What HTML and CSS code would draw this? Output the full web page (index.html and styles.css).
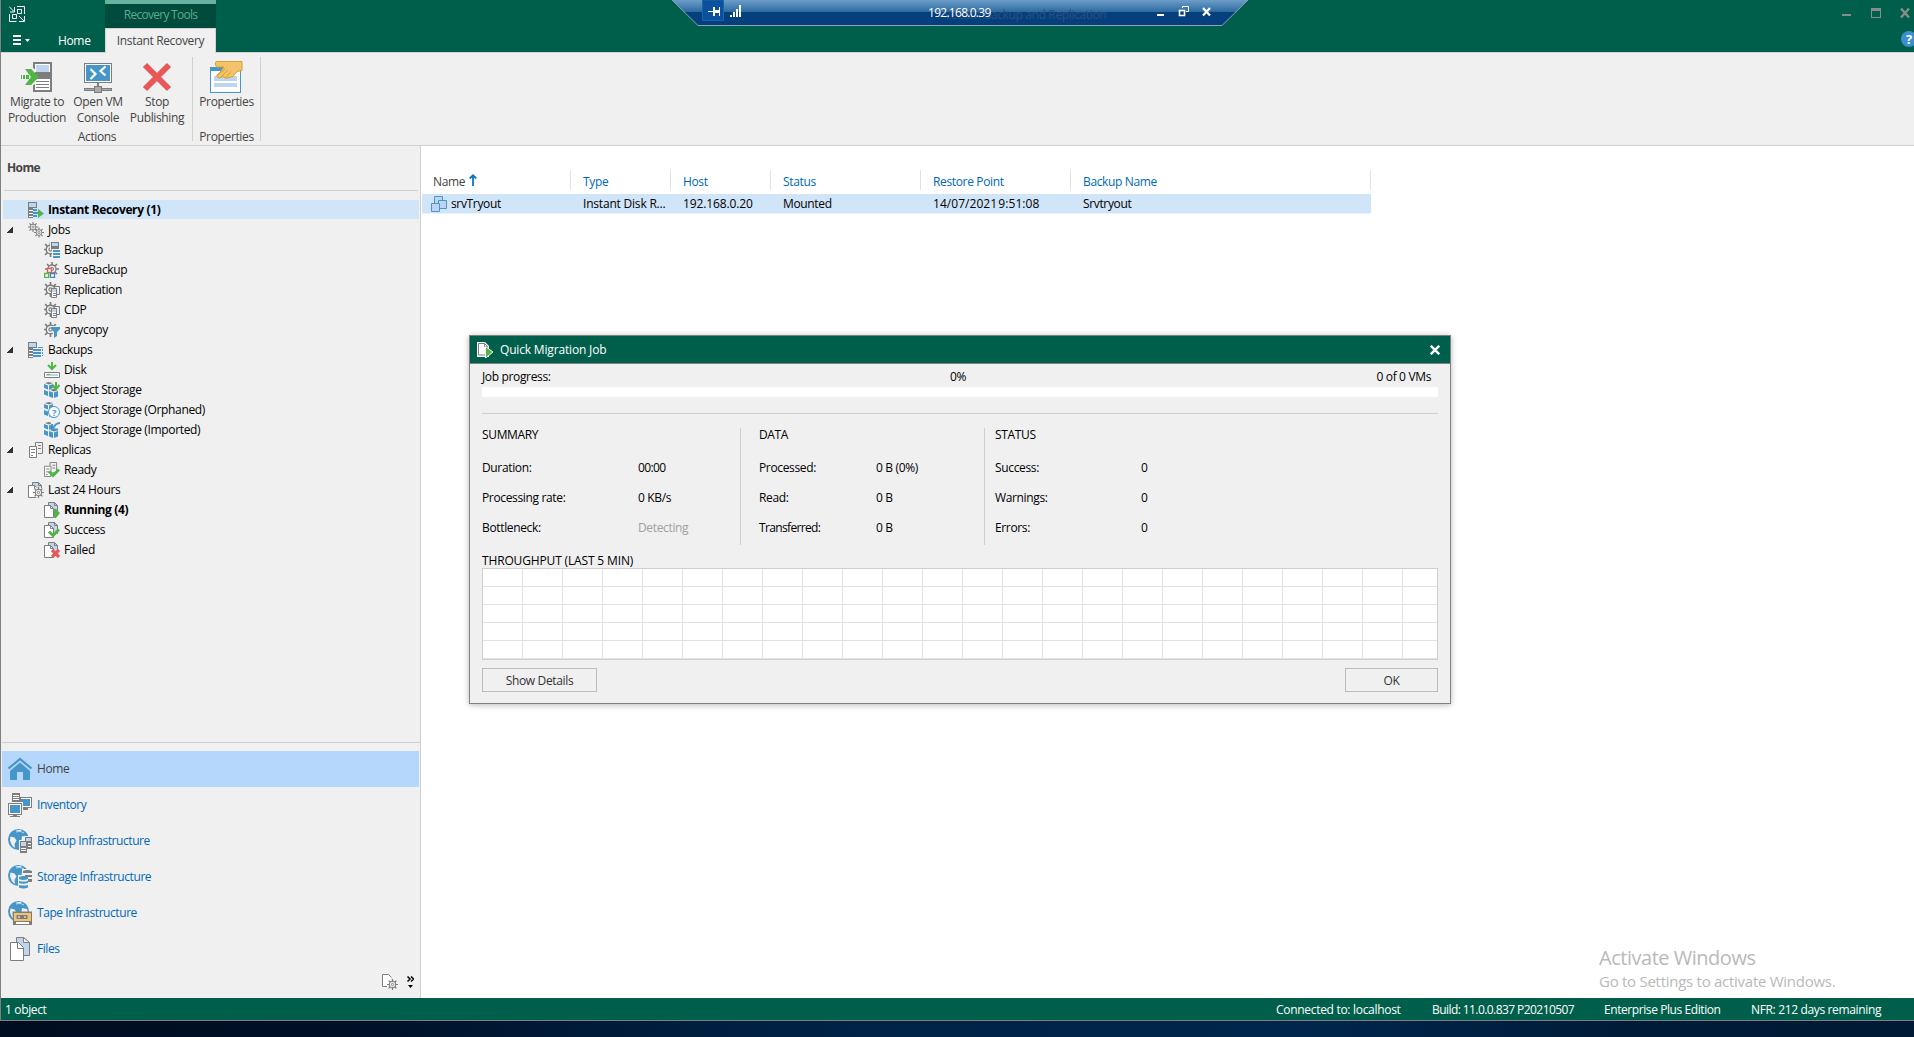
FILE: index.html
```
<!DOCTYPE html>
<html lang="en">
<head>
<meta charset="utf-8">
<title>Veeam Backup and Replication</title>
<link rel="stylesheet" href="styles.css">
</head>
<body>
<svg class="defs" aria-hidden="true">
  <symbol id="gear" viewBox="0 0 16 16"><g fill="none" stroke="#7d7d7d"><circle cx="8" cy="8" r="4.6" stroke-width="1.5"/><circle cx="8" cy="8" r="1.7" stroke-width="1.2"/><path stroke-width="1.8" d="M8 0v3.5M8 12.5V16M0 8h3.5M12.5 8H16M2.3 2.3l2.4 2.4M11.3 11.3l2.4 2.4M13.7 2.3l-2.4 2.4M4.7 11.3l-2.4 2.4"/></g></symbol>
  <symbol id="server" viewBox="0 0 16 16"><path fill="#7d7d7d" d="M0 0h9v6H5v10H0z"/><path fill="#bdd5ef" d="M1 1h7v4H1z"/><path fill="#fff" d="M1 8h4v1H1zM1 11h4v1H1zM1 14h4v1H1z"/></symbol>
  <symbol id="page" viewBox="0 0 16 16"><path fill="#bdd5ef" stroke="#7d7d7d" d="M4.500 4V.5h6l3 3v8H10"/><path fill="#fff" stroke="#7d7d7d" d="M.5 3.500h6l3 3v9h-9z"/><path fill="none" stroke="#7d7d7d" d="M6.500 3.500v3h3M10.500.5v3h3"/></symbol>
  <symbol id="tick" viewBox="0 0 16 16"><path fill="none" stroke="#4fb545" stroke-width="3" d="M5 9.500l4 4 6-6"/></symbol>
  <symbol id="twinserver" viewBox="0 0 16 16"><path fill="#f0f0f0" stroke="#7d7d7d" d="M7.500 4V.5h7v11H10"/><path stroke="#7d7d7d" d="M10 3.500h3M10 6.500h3"/><path fill="#fff" stroke="#7d7d7d" d="M1.500 4.500h7v11h-7z"/><path stroke="#7d7d7d" d="M3 7.500h4M3 10.500h4M3 13.500h2"/></symbol>
  <symbol id="cubes" viewBox="0 0 16 16"><g fill="#4796c9"><path d="M0 2l4 1.500v4L0 6zM0 8l4 1.500V14L0 12.500zM5 9l4 1.500V16l-4-1.500zM10 10.500L14 9v5.500L10 16zM5 3.500L9 2v4L5 8z"/></g><path fill="#7d7d7d" d="M1 1l3.500-1L9 1 5 2.500zM6 8l4-1.500L14 8l-4 1.500z"/></symbol>
  <symbol id="globe" viewBox="0 0 24 24"><circle cx="10.500" cy="10.500" r="10.500" fill="#4796c9"/><path fill="#f0f0f0" d="M2.500 7.500l4 1 2 3-2 3.500.5 4-3-2.500-2-5zM14 7l5 1 1.500 5-4 1-3-3zM7 1.500l7-.8-2 2z"/><path fill="none" stroke="#bdd5ef" d="M8 3q4-2 8 1"/></symbol>
  <symbol id="i-instant" viewBox="0 0 16 16"><use href="#server"/><path fill="#4796c9" d="M5 7h4v2H5zM5 10h5v2H5zM5 13h4v2H5z"/><path fill="#4fb545" d="M10 7l6 4.500L10 16z"/></symbol>
  <symbol id="i-jobs" viewBox="0 0 16 16"><use href="#gear" width="10" height="10"/><use href="#gear" x="6" y="5" width="10" height="11"/></symbol>
  <symbol id="i-backup" viewBox="0 0 16 16"><use href="#gear" x="-1" width="15" height="15"/><path fill="#f0f0f0" d="M6 0h10v16H8V7H6z"/><path fill="#7d7d7d" d="M7 0h8v7H7z"/><path fill="#bdd5ef" d="M8 1h6v3H8z"/><path fill="#4796c9" d="M9 8h7v2H9zM9 11h7v2H9zM9 14h7v2H9z"/></symbol>
  <symbol id="i-sure" viewBox="0 0 16 16"><use href="#gear" width="16" height="14"/><path fill="#fff" stroke="#e85858" stroke-width="1.300" d="M3.500 6.500h4v4h-4z"/><path fill="#fff" stroke="#4fb545" stroke-width="1.300" d="M.6 11.500h4v4h-4z"/><path fill="#fff" stroke="#4380c5" stroke-width="1.300" d="M6.500 11.500h4v4h-4z"/></symbol>
  <symbol id="i-repl" viewBox="0 0 16 16"><use href="#gear" x="-1" width="15" height="15"/><path fill="#f0f0f0" stroke="#7d7d7d" d="M10.500 6V4.500h5v8H13"/><path fill="#fff" stroke="#7d7d7d" d="M7.500 6.500h5v9h-5z"/><path stroke="#7d7d7d" d="M9 11.500h3M9 13.500h3"/><path fill="#bdd5ef" d="M8 7h4v3H8z"/></symbol>
  <symbol id="i-copy" viewBox="0 0 16 16"><use href="#gear" x="-1" width="15" height="15"/><path fill="#f0f0f0" d="M6 4h10v3l-3 4v5h-4v-5z"/><path fill="#4796c9" d="M7 5h9v2l-3 3v4l-3 2v-6L7 7z"/></symbol>
  <symbol id="i-backups" viewBox="0 0 16 16"><use href="#server"/><path fill="#4796c9" d="M5 7h8v2H5zM5 10h8v2H5zM5 13h8v2H5zM10 5h5v1h-5zM14 7h1v2h-1zM14 10h1v2h-1zM14 13h1v1h-1z"/></symbol>
  <symbol id="i-disk" viewBox="0 0 16 16"><path fill="#fff" stroke="#7d7d7d" d="M.5 10.500h15v5H.5z"/><path fill="#bdd5ef" d="M2 12h12v2H2z"/><path fill="#4fb545" d="M3 12h3v1H3z"/><path fill="none" stroke="#4fb545" stroke-width="2" d="M8 0v7M4 3l4 4 4-4"/></symbol>
  <symbol id="i-obj" viewBox="0 0 16 16"><use href="#cubes"/><path fill="none" stroke="#f0f0f0" stroke-width="3" d="M12 0v7"/><path fill="none" stroke="#4fb545" stroke-width="2" d="M12 0v7M8.500 3l3.500 4 3.500-4"/></symbol>
  <symbol id="i-orph" viewBox="0 0 16 16"><use href="#cubes"/><circle cx="10" cy="10" r="5.500" fill="#fff" stroke="#4796c9"/><text x="10.200" y="13.500" text-anchor="middle" font-size="9.500" font-weight="700" fill="#4796c9">?</text></symbol>
  <symbol id="i-imp" viewBox="0 0 16 16"><use href="#cubes"/><path fill="#f0f0f0" d="M7 0h9v8H7z"/><path fill="none" stroke="#4796c9" stroke-width="2" d="M16 1q-5 0-7 6M8 2v5.500h6"/></symbol>
  <symbol id="i-ready" viewBox="0 0 16 16"><use href="#twinserver" x="-1" width="15" height="15"/><use href="#tick"/></symbol>
  <symbol id="i-last" viewBox="0 0 16 16"><use href="#page"/><circle cx="10.500" cy="10.500" r="5.500" fill="#f0f0f0"/><use href="#gear" x="5" y="5" width="11" height="11"/></symbol>
  <symbol id="i-run" viewBox="0 0 16 16"><use href="#page"/><path fill="#4fb545" d="M10 7h2l4 4-4 5h-2z"/></symbol>
  <symbol id="i-succ" viewBox="0 0 16 16"><use href="#page"/><use href="#tick"/></symbol>
  <symbol id="i-fail" viewBox="0 0 16 16"><use href="#page"/><path stroke="#e85858" stroke-width="3.200" d="M8 8l7 7M15 8l-7 7"/></symbol>
</svg>

<div class="window">
  <header class="titlebar">
    <div class="left-tools">
      <svg class="logo" width="16" height="16" viewBox="0 0 16 16" fill="none" stroke="#fff"><path d="M0 .5l5 5M5.500 1v5H1M8 .5h7.500V8M8.500 3v4.500h4V3.500H8M.5 8v7.500h7M3.500 8.500h4v4h-4zM10 10l5 5M10 15.500h5.500V10"/></svg>
      <svg class="burger" width="17" height="10" viewBox="0 0 17 10"><path fill="#fff" d="M0 0h8v2H0zM0 4h8v2H0zM0 8h8v2H0zM12 4h5l-2.500 3z"/></svg>
    </div>
    <div class="home-tab"><span class="t">Home</span></div>
    <div class="context">
      <div class="context-title"><span class="t">Recovery Tools</span></div>
      <div class="context-tab"><span class="t">Instant Recovery</span></div>
    </div>
    <svg class="controls" width="74" height="52" viewBox="0 0 74 52"><path fill="#8b8b8b" d="M2 14h9v2H2zM31 8h10v10H31zm1 3v6h8v-6z" fill-rule="evenodd"/><path stroke="#8b8b8b" stroke-width="2.400" d="M61 8.500l8 9M69 8.500l-8 9"/><circle cx="69" cy="39" r="8" fill="#3a8fce"/><text x="69" y="44" text-anchor="middle" font-size="13" font-weight="700" fill="#fff">?</text></svg>
  </header>

  <section class="ribbon">
    <div class="group actions">
      <div class="buttons">
        <div class="rb b1"><svg width="32" height="32" viewBox="0 0 32 32"><path fill="#7d7d7d" d="M12 1h19v30H12z"/><path fill="#fff" d="M14 3h15v8H14zM14 18h15v11H14z"/><path fill="#bdd5ef" d="M15 4h13v7H15z"/><path fill="#7d7d7d" d="M15 20h13v1H15zM15 23h13v1H15zM15 26h13v1H15z"/><path fill="#f0f0f0" d="M3 6h8l3 2.500V23l-3 2H3z"/><path fill="#7d7d7d" d="M18 11h13v7H18z"/><path fill="#4fb545" d="M4 8h6l8 8-8 8H4l6-8zM0 14h1v4H0zM2 14h2v4H2zM5 14h3v4H5z"/></svg><span class="t">Migrate to</span><span class="t">Production</span></div>
        <div class="rb b2"><svg width="32" height="32" viewBox="0 0 32 32"><path fill="#7d7d7d" d="M2 2h28v20H2zM15 22h2v4h-2z"/><path fill="#fff" d="M3 3h26v18H3z"/><path fill="#4796c9" d="M4 4h24v16H4z"/><path fill="none" stroke="#fff" stroke-width="2.200" d="M8.500 8l5 5-5 5M23.500 5.500l-5 4.500 5 4.500"/><path fill="#7d7d7d" d="M2 27h28v3H2zM12 25h8v7h-8z"/><path fill="#aaa" d="M3 28h9v1H3zM20 28h9v1h-9zM13 26h6v5h-6z"/></svg><span class="t">Open VM</span><span class="t">Console</span></div>
        <div class="rb b3"><svg width="32" height="32" viewBox="0 0 32 32"><path stroke="#e85858" stroke-width="6" d="M4 4l24 24M28 4L4 28"/></svg><span class="t">Stop</span><span class="t">Publishing</span></div>
      </div>
      <div class="group-name"><span class="t">Actions</span></div>
    </div>
    <div class="group props">
      <div class="buttons">
        <div class="rb b4"><svg width="33" height="32" viewBox="0 0 33 32"><path fill="#4796c9" d="M0 6h31v26H0z"/><path fill="#fff" d="M1 10h29v21H1z"/><path fill="#bdd5ef" d="M4 15h23v5H4zM4 22h23v4H4z"/><path fill="#f2c36b" stroke="#dca02c" d="M6 .5h26v9l-5 1-4 5-4 1-3 .8-3-1.800-4 1.500q-3-1-2-3l4-4 3-4H6.500Q4 2.500 6 .5z"/><path fill="none" stroke="#dca02c" d="M7 15l8-7M11 16l7-7M16 16.500l5-6"/></svg><span class="t">Properties</span></div>
      </div>
      <div class="group-name"><span class="t">Properties</span></div>
    </div>
  </section>

  <div class="workspace">
    <aside class="sidebar">
      <h2><span class="t">Home</span></h2>
      <ul class="tree">
        <li class="sel"><svg class="ic"><use href="#i-instant"/></svg><span class="t">Instant Recovery (1)</span></li>
        <li class="open"><svg class="ic"><use href="#i-jobs"/></svg><span class="t">Jobs</span></li>
        <li class="sub"><svg class="ic"><use href="#i-backup"/></svg><span class="t">Backup</span></li>
        <li class="sub"><svg class="ic"><use href="#i-sure"/></svg><span class="t">SureBackup</span></li>
        <li class="sub"><svg class="ic"><use href="#i-repl"/></svg><span class="t">Replication</span></li>
        <li class="sub"><svg class="ic"><use href="#i-repl"/></svg><span class="t">CDP</span></li>
        <li class="sub"><svg class="ic"><use href="#i-copy"/></svg><span class="t">anycopy</span></li>
        <li class="open"><svg class="ic"><use href="#i-backups"/></svg><span class="t">Backups</span></li>
        <li class="sub"><svg class="ic"><use href="#i-disk"/></svg><span class="t">Disk</span></li>
        <li class="sub"><svg class="ic"><use href="#i-obj"/></svg><span class="t">Object Storage</span></li>
        <li class="sub"><svg class="ic"><use href="#i-orph"/></svg><span class="t">Object Storage (Orphaned)</span></li>
        <li class="sub"><svg class="ic"><use href="#i-imp"/></svg><span class="t">Object Storage (Imported)</span></li>
        <li class="open"><svg class="ic"><use href="#twinserver"/></svg><span class="t">Replicas</span></li>
        <li class="sub"><svg class="ic"><use href="#i-ready"/></svg><span class="t">Ready</span></li>
        <li class="open"><svg class="ic"><use href="#i-last"/></svg><span class="t">Last 24 Hours</span></li>
        <li class="sub bold"><svg class="ic"><use href="#i-run"/></svg><span class="t">Running (4)</span></li>
        <li class="sub"><svg class="ic"><use href="#i-succ"/></svg><span class="t">Success</span></li>
        <li class="sub"><svg class="ic"><use href="#i-fail"/></svg><span class="t">Failed</span></li>
      </ul>
      <nav class="views">
        <a class="on"><svg viewBox="0 0 24 24"><path fill="#4796c9" d="M2 14l10-8.500L22 14v9h-7v-8H9v8H2z"/><path fill="none" stroke="#4796c9" stroke-width="2.200" d="M.5 11.500L12 2l11.500 9.500"/></svg><span class="t">Home</span></a>
        <a><svg viewBox="0 0 24 24"><path fill="#7d7d7d" d="M4 0h8v9H4zM12 4h12v11H12zM15 15h5v2h-5z"/><path fill="#fff" d="M5 2h6v1H5zM5 4h6v1H5zM5 6h6v1H5zM13 5h10v9H13z"/><path fill="#4796c9" d="M13 6h9v7h-9z"/><path fill="#f0f0f0" d="M0 9h15v10H0z"/><path fill="#7d7d7d" d="M0 10h14v12H0zM5 22h4v1h3v1H2v-1h3z"/><path fill="#fff" d="M1 11h12v10H1z"/><path fill="#4796c9" d="M2 12h10v8H2z"/></svg><span class="t">Inventory</span></a>
        <a><svg viewBox="0 0 24 24"><use href="#globe"/><path fill="#f0f0f0" d="M11 11h5V7h8v14h-4v3h-9z"/><path fill="#7d7d7d" d="M17 8h7v12h-7zM12 12h7v12h-7z"/><path fill="#bdd5ef" d="M18 9h5v3h-5zM13 13h5v4h-5z"/><path fill="#fff" d="M13 19h5v1h-5zM13 21h5v1h-5zM20 14h3v1h-3zM20 17h3v1h-3z"/></svg><span class="t">Backup Infrastructure</span></a>
        <a><svg viewBox="0 0 24 24"><use href="#globe"/><path fill="#f0f0f0" d="M10 10h4V4h10v15h-3v5H10z"/><path fill="#7d7d7d" d="M15 6q4.500-2 9 0v2h-9zM17 10h7v2h-7zM20 14h4v3h-4z"/><path fill="#4796c9" d="M11 12q5-2 9 0v2q-5 2-9 0zM11 16q5 1 9 0v2q-5 1.500-9 0zM11 20q5 1 9 0v2.500q-5 2-9 0z"/></svg><span class="t">Storage Infrastructure</span></a>
        <a><svg viewBox="0 0 24 24"><use href="#globe"/><path fill="#7d7d7d" d="M4.500 10.500H24V24H5z"/><path fill="#f2c36b" d="M6 12h17v8H6z"/><path fill="#7d7d7d" d="M8.500 14h11v4h-11z"/><path fill="#fff" d="M10 15.500h2v1h-2zM16 15.500h2v1h-2zM8 21h13v2H8z"/></svg><span class="t">Tape Infrastructure</span></a>
        <a><svg viewBox="0 0 24 24"><path fill="#bdd5ef" stroke="#7d7d7d" d="M8.500 5V.5h7l6 5v13H16"/><path fill="#fff" stroke="#7d7d7d" d="M15.500.5l6 5h-6zM2.500 5.500h8l5 5v13h-13z"/><path fill="none" stroke="#7d7d7d" d="M9.500 5.500v6h6"/></svg><span class="t">Files</span></a>
      </nav>
      <div class="views-more">
        <svg width="16" height="16" viewBox="0 0 16 16"><path fill="#fff" stroke="#7d7d7d" d="M5 12.500H.5V.5h6l3 3"/><use href="#gear" x="5" y="5" width="11" height="11"/></svg>
        <svg width="7" height="12" viewBox="0 0 7 12"><path fill="none" stroke="#000" stroke-width="1.500" d="M.5.5L3 3 .5 5.500M4 .5L6.500 3 4 5.500"/><path d="M1 9h5l-2.500 3z"/></svg>
      </div>
    </aside>

    <main class="list">
      <div class="row head"><div class="name"><span class="t">Name</span><svg width="8" height="12" viewBox="0 0 8 12"><path fill="none" stroke="#0b74c4" stroke-width="1.800" d="M4 12V1.500M.7 4.500L4 1.300l3.300 3.200"/></svg></div><div><span class="t">Type</span></div><div><span class="t">Host</span></div><div><span class="t">Status</span></div><div><span class="t">Restore Point</span></div><div><span class="t">Backup Name</span></div></div>
      <div class="row item"><div class="name"><svg width="16" height="16" viewBox="0 0 16 16" fill="#bdd5ef" stroke="#4796c9"><path d="M3.500.5h8v9h-8z"/><path d="M7.500 4.500h8v8h-8z"/><path d="M.5 7.500h8v8h-8z"/></svg><span class="t">srvTryout</span></div><div class="type"><span class="t">Instant Disk R...</span></div><div class="host"><span class="t">192.168.0.20</span></div><div><span class="t">Mounted</span></div><div class="date"><span class="t">14/07/2021 9:51:08</span></div><div><span class="t">Srvtryout</span></div></div>
      <div class="activate"><p class="a1"><span class="t">Activate Windows</span></p><p class="a2"><span class="t">Go to Settings to activate Windows.</span></p></div>
    </main>
  </div>

  <footer class="status"><span class="t s0">1 object</span><span class="t s1">Connected to: localhost</span><span class="t s2">Build: 11.0.0.837 P20210507</span><span class="t s3">Enterprise Plus Edition</span><span class="t s4">NFR: 212 days remaining</span></footer>
</div>
<div class="desktop"></div>

<section class="dialog">
  <header><svg width="17" height="16" viewBox="0 0 17 16"><path fill="#fff" d="M0 0h8l4 4v11H0z"/><path fill="none" stroke="#7d7d7d" d="M1.500 1.500h6l3 3v8.500h-9zM7.500 1.500v3h3"/><path fill="#4fb545" stroke="#fff" d="M8.500 4.500L16 10l-7.500 6z"/></svg><span class="t">Quick Migration Job</span><svg class="x" width="10" height="10" viewBox="0 0 10 10"><path stroke="#fff" stroke-width="2.400" d="M.8.800l8.400 8.400M9.200.8L.8 9.200"/></svg></header>
  <div class="body">
    <div class="progress-text"><span class="t">Job progress:</span><span class="t">0%</span><span class="t">0 of 0 VMs</span></div>
    <div class="bar"></div>
    <div class="stats">
      <dl class="c1"><dt class="h"><span class="t">SUMMARY</span></dt><dt><span class="t">Duration:</span></dt><dd class="time"><span class="t">00:00</span></dd><dt><span class="t">Processing rate:</span></dt><dd><span class="t">0 KB/s</span></dd><dt><span class="t">Bottleneck:</span></dt><dd class="dim"><span class="t">Detecting</span></dd></dl>
      <dl class="c2"><dt class="h"><span class="t">DATA</span></dt><dt><span class="t">Processed:</span></dt><dd><span class="t">0 B (0%)</span></dd><dt><span class="t">Read:</span></dt><dd><span class="t">0 B</span></dd><dt class="tight"><span class="t">Transferred:</span></dt><dd><span class="t">0 B</span></dd></dl>
      <dl class="c3"><dt class="h"><span class="t">STATUS</span></dt><dt><span class="t">Success:</span></dt><dd><span class="t">0</span></dd><dt><span class="t">Warnings:</span></dt><dd><span class="t">0</span></dd><dt><span class="t">Errors:</span></dt><dd><span class="t">0</span></dd></dl>
    </div>
    <div class="chart-title"><span class="t">THROUGHPUT (LAST 5 MIN)</span></div>
    <div class="chart"></div>
    <div class="actions-row"><button class="details"><span class="t">Show Details</span></button><button class="ok"><span class="t">OK</span></button></div>
  </div>
</section>

<div class="remote-bar">
  <svg class="shape" width="576" height="27" viewBox="0 0 576 27"><defs><linearGradient id="sky" x2="0" y2="1"><stop offset="0" stop-color="#6c9dc8"/><stop offset="1" stop-color="#2c6a9f"/></linearGradient></defs><path fill="#05407c" d="M0 0h576l-26 26H26z"/><path fill="url(#sky)" d="M0 0h576l-12 12H12z"/><path fill="none" stroke="#8fa3bd" d="M0 0l26 25.500h524L576 0"/><path fill="#0a509a" stroke="#1467ad" d="M30.500 0v20.500h21V0z"/><path fill="#fff" d="M36 11h5v1h-5zM41 7h2v9h-2zM43 10h4v3h-4zM47 7h1v9h-1zM58 15h2v2h-2zM61 12h2v5h-2zM64 9h2v8h-2zM67 5h2v12h-2zM485 14h7v2h-7z"/><path fill="none" stroke="#fff" d="M510.500 8V6.500h6v5H514"/><path fill="none" stroke="#fff" stroke-width="1.600" d="M507.500 10.500h5v5h-5z"/><path stroke="#fff" stroke-width="2.200" d="M531 8l7 7.500M538 8l-7 7.500"/></svg>
  <span class="t ghost">Veeam Backup and Replication</span>
  <span class="t address">192.168.0.39</span>
</div>
</body>
</html>
```
FILE: styles.css
```
* { box-sizing: border-box; }
body { margin: 0; width: 1914px; height: 1037px; overflow: hidden; display: flex; flex-direction: column; position: relative; font: 12px/16px "Open Sans", "Noto Sans", sans-serif; letter-spacing: -0.35px; color: #000; background: #fff; }
.defs { display: none; }
.t { white-space: pre; }
h2, p, ul, dl, dt, dd { margin: 0; padding: 0; }
.window { flex: 1; display: flex; flex-direction: column; border-left: 1px solid #808080; border-bottom: 1px solid #808080; }
.desktop { height: 16px; background: linear-gradient(90deg, #000c20, #001027 18%, #001a38 30%, #002347 45%, #00264d 68%, #001b38 85%, #001a35); }

.titlebar { height: 53px; display: flex; background: #005f4b; border-bottom: 1px solid #d4d4d4; color: #fff; }
.left-tools { width: 42px; display: flex; flex-direction: column; }
.logo { margin: 6px 0 0 8px; }
.burger { margin: 13px 0 0 12px; }
.home-tab { width: 62px; padding: 33px 0 0 15px; }
.context { width: 111px; height: 53px; display: flex; flex-direction: column; text-align: center; }
.context-title { height: 28px; padding-top: 3px; border-top: 4px solid #66b29f; background: #004b3c; color: #59ab94; letter-spacing: -0.73px; }
.context-tab { flex: 1; padding-top: 4px; background: #f0f0f0; border: 1px solid #d4d4d4; border-bottom: 0; color: #444; }
.controls { margin-left: auto; }

.ribbon { height: 93px; display: flex; background: #f0f0f0; border-bottom: 1px solid #d0d0d0; padding: 4px 0; color: #444; }
.group { height: 84px; display: flex; flex-direction: column; justify-content: space-between; border-right: 1px solid #d0d0d0; text-align: center; }
.actions { width: 192px; padding-left: 6px; }
.props { width: 68px; }
.buttons { display: flex; }
.rb { display: flex; flex-direction: column; align-items: center; padding-top: 4px; }
.rb svg { margin-bottom: 1px; }
.b1 { width: 60px; }
.b2 { width: 62px; }
.b3 { width: 56px; }
.b4 { width: 67px; }
.group-name { height: 12px; line-height: 16px; }
.actions .group-name { padding-right: 5px; }

.workspace { flex: 1; display: flex; min-height: 0; }
.sidebar { width: 420px; display: flex; flex-direction: column; background: #f0f0f0; border-right: 1px solid #cfcfcf; }
.sidebar h2 { height: 45px; margin: 0 2px 9px 3px; padding: 14px 0 0 3px; border-bottom: 1px solid #cfcfcf; font-size: 12px; line-height: 16px; font-weight: 700; letter-spacing: -0.6px; color: #444; }
.tree { list-style: none; margin: 0 1px 0 2px; }
.tree li { height: 20px; display: flex; align-items: center; padding-left: 25px; }
.tree .t { margin-left: 4px; }
.ic { width: 16px; height: 16px; flex: none; }
.tree li.sel { background: #d1e5f9; font-weight: 700; border-bottom: 1px solid #f0f0f0; }
.tree li.bold { font-weight: 700; }
.tree li.sub { padding-left: 41px; }
.tree li.open { padding-left: 4px; }
.tree li.open::before { content: ""; width: 6px; height: 6px; margin-right: 15px; background: linear-gradient(135deg, transparent 45%, #333 45%); }
.views { margin-top: auto; border-top: 1px solid #cfcfcf; padding-top: 8px; margin-left: 1px; display: flex; flex-direction: column; letter-spacing: -0.43px; }
.views a { height: 36px; display: flex; align-items: center; padding-left: 6px; color: #0068b8; }
.views svg { width: 24px; height: 24px; margin-right: 5px; }
.views .on { background: #b4d7fb; color: #444; margin-right: 1px; }
.views-more { height: 31px; display: flex; gap: 9px; align-items: center; justify-content: flex-end; padding: 0 6px 2px 0; }

.list { flex: 1; padding-top: 24px; display: flex; flex-direction: column; }
.row { display: grid; grid-template-columns: 150px 100px 100px 150px 150px 300px; width: 951px; }
.row > div { padding-left: 12px; }
.head { height: 20px; margin-bottom: 4px; color: #0068b8; }
.head > div { border-right: 1px solid #e2e2e2; padding-top: 4px; }
.head .name { color: #444; display: flex; gap: 4px; padding-left: 12px; }
.item { height: 20px; background: #d1e5f9; border-bottom: 1px solid #e9f2fc; margin-left: 1px; width: 949px; grid-template-columns: 149px 100px 100px 150px 150px 300px; align-items: center; }
.item .name { display: flex; align-items: center; gap: 4px; padding-left: 9px; }
.type { letter-spacing: -0.2px; }
.host { letter-spacing: -0.13px; }
.date { letter-spacing: 0.05px; word-spacing: -2px; }
.activate { margin: auto 0 7px 1178px; color: #b9b9b9; }
.a1 { font-size: 20px; line-height: 26px; letter-spacing: -0.48px; }
.a2 { font-size: 15px; line-height: 20px; letter-spacing: -0.27px; }

.status { height: 22px; display: flex; align-items: center; background: #005f4b; color: #fff; padding: 2px 0 0 4px; }
.s0 { width: 1271px; }
.s1 { width: 156px; letter-spacing: -0.3px; }
.s2 { width: 172px; letter-spacing: -0.57px; }
.s3 { width: 147px; letter-spacing: -0.42px; }

.dialog { position: absolute; left: 469px; top: 335px; width: 982px; height: 369px; border: 1px solid #808080; background: #f0f0f0; box-shadow: 0 1px 6px rgba(0,0,0,.28); }
.dialog header { height: 28px; display: flex; align-items: center; gap: 6px; padding: 0 10px 0 7px; background: #005f4b; color: #fff; border-bottom: 1px solid #808080; letter-spacing: -0.17px; }
.dialog header svg { flex: none; }
.dialog .x { margin-left: auto; }
.body { padding: 5px 12px 0; }
.progress-text { display: grid; grid-template-columns: 468px 1fr auto; padding-right: 7px; }
.bar { height: 10px; margin: 2px 0 16px; background: #fff; }
.stats { display: flex; border-top: 1px solid #cfcfcf; padding-top: 14px; height: 133px; }
dl { display: grid; grid-template-rows: 32px 30px 30px 20px; height: 117px; }
.h { grid-column: 1 / 3; line-height: 14px; }
.c1 { width: 259px; grid-template-columns: 156px 1fr; border-right: 1px solid #cfcfcf; }
.c2 { width: 244px; grid-template-columns: 117px 1fr; padding-left: 18px; border-right: 1px solid #cfcfcf; }
.c3 { padding-left: 10px; grid-template-columns: 146px 1fr; }
dl .t { display: block; }
.time { letter-spacing: -0.6px; }
.tight { letter-spacing: -0.65px; }
.dim { color: #a0a0a0; }
.chart-title { height: 22px; padding-top: 7px; letter-spacing: -0.15px; }
.chart { height: 92px; border: 1px solid #cfcfcf; background-color: #fff; background-image: repeating-linear-gradient(90deg, transparent 0 39px, #e2e2e2 39px 40px), repeating-linear-gradient(180deg, transparent 0 17px, #e2e2e2 17px 18px); }
.actions-row { display: flex; justify-content: space-between; padding-top: 8px; }
button { height: 24px; background: #f0f0f0; border: 1px solid #bcbcbc; font: inherit; letter-spacing: inherit; color: #333; padding: 2px 0 0; }
.details { width: 115px; }
.ok { width: 93px; }

.remote-bar { position: absolute; left: 672px; top: 0; width: 576px; height: 27px; }
.shape { position: absolute; left: 0; top: 0; }
.ghost { position: absolute; left: 272px; top: 7px; color: #2a5080; }
.address { position: absolute; left: 256px; top: 5px; color: #fff; letter-spacing: -0.72px; }
```
